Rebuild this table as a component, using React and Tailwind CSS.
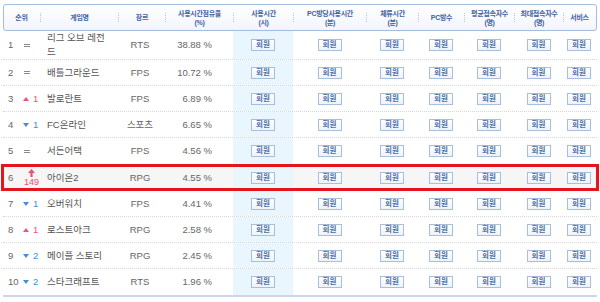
import React from 'react'

const COLS = 'grid grid-cols-[37px_78px_47px_68px_60px_73px_52px_46px_50px_49px_32px]'

const HEADS = [
  ['순위'], ['게임명'], ['장르'], ['사용시간점유율', '(%)'], ['사용시간', '(시)'],
  ['PC방당사용시간', '(분)'], ['체류시간', '(분)'], ['PC방수'], ['평균접속자수', '(명)'],
  ['최대접속자수', '(명)'], ['서비스'],
]

const ROWS = [
  { rank: 1, ch: 'same', name: '리그 오브 레전드', genre: 'RTS', share: '38.88 %', tall: true },
  { rank: 2, ch: 'same', name: '배틀그라운드', genre: 'FPS', share: '10.72 %' },
  { rank: 3, ch: 'up', n: 1, name: '발로란트', genre: 'FPS', share: '6.89 %' },
  { rank: 4, ch: 'down', n: 1, name: 'FC온라인', genre: '스포츠', share: '6.65 %' },
  { rank: 5, ch: 'same', name: '서든어택', genre: 'FPS', share: '4.56 %' },
  { rank: 6, ch: 'jump', n: 149, name: '아이온2', genre: 'RPG', share: '4.55 %', hot: true },
  { rank: 7, ch: 'down', n: 1, name: '오버워치', genre: 'FPS', share: '4.41 %' },
  { rank: 8, ch: 'up', n: 1, name: '로스트아크', genre: 'RPG', share: '2.58 %' },
  { rank: 9, ch: 'down', n: 2, name: '메이플 스토리', genre: 'RPG', share: '2.45 %' },
  { rank: 10, ch: 'down', n: 2, name: '스타크래프트', genre: 'RTS', share: '1.96 %' },
]

function Btn() {
  return (
    <span className="flex h-[12px] w-[24px] items-center justify-center border border-[#a7bedd] bg-gradient-to-b from-white to-[#eef3fa] text-[7.5px] font-bold leading-none text-[#4a6da3]">
      회원
    </span>
  )
}

function Change({ ch, n }) {
  if (ch === 'same') {
    return (
      <span className="ml-[2px] flex w-[6px] flex-col gap-[1px]">
        <span className="h-px bg-[#8a8a8a]" />
        <span className="h-px bg-[#8a8a8a]" />
      </span>
    )
  }
  if (ch === 'jump') {
    return (
      <span className="ml-[1px] flex w-[17px] flex-col items-center leading-[9px] text-[#ee4d6f]">
        <svg width="7" height="8" viewBox="0 0 7 8"><path d="M3.5 0 L7 4 H4.6 V8 H2.4 V4 H0 Z" fill="#ee4d6f" /></svg>
        <span className="mt-[1px] text-[9px]">{n}</span>
      </span>
    )
  }
  const up = ch === 'up'
  return (
    <span className={`flex items-center ${up ? 'text-[#ef5476]' : 'text-[#3f8ee0]'}`}>
      <svg width="6" height="4" viewBox="0 0 6 4" className="ml-[1px]">
        {up
          ? <path d="M3 0 L6 4 H0 Z" fill="#ef5476" />
          : <path d="M0 0 H6 L3 4 Z" fill="#3f8ee0" />}
      </svg>
      <span className="ml-[4px]">{n}</span>
    </span>
  )
}

function Cells({ r }) {
  return (
    <>
      <div className="flex items-center pl-[5px]">
        <span className="w-[14px]">{r.rank}</span>
        <Change ch={r.ch} n={r.n} />
      </div>
      <div className="flex items-center pl-[7px] pr-[7px] text-[#555]">{r.name}</div>
      <div className="flex items-center justify-center pr-[3px]">{r.genre}</div>
      <div className="flex items-center justify-end pr-[21px]">{r.share}</div>
      <div className="flex items-center justify-center bg-[#eaf6fe]"><Btn /></div>
      {[0, 1, 2, 3, 4, 5].map(i => (
        <div key={i} className="flex items-center justify-center"><Btn /></div>
      ))}
    </>
  )
}

export default function App() {
  return (
    <div className="h-[302px] w-[600px] overflow-hidden bg-white px-[3px] pt-[4px] font-['Liberation_Sans','Noto_Sans_CJK_KR',sans-serif] text-[9.5px] leading-[14px] text-[#666]">
      <div className="h-[27px] rounded-[3px] border border-[#a3bcdf] bg-gradient-to-b from-white to-[#f1f5fb]">
        <div className={`${COLS} -mx-px h-full`}>
          {HEADS.map((h, i) => (
            <div key={i} className="flex items-center">
              {i > 0 && <span className="h-[9px] border-l border-dotted border-[#c3c3c3]" />}
              <span className="flex flex-1 flex-col items-center text-[7px] font-bold leading-[9px] tracking-[-0.3px] text-[#3f62a0]">
                {h.map(t => <span key={t} className="whitespace-nowrap">{t}</span>)}
              </span>
            </div>
          ))}
        </div>
      </div>

      <div className="border-b-2 border-[#cbd7e8]">
        {ROWS.map(r => r.hot ? (
          <div key={r.rank} className="-mx-[2px] h-[27px] border-[3px] border-[#e2161c] bg-[#f6f6f6]">
            <div className={`${COLS} -ml-px h-full`}>
              <Cells r={r} />
            </div>
          </div>
        ) : (
          <div key={r.rank} className={`${COLS} ${r.tall ? 'h-[29px]' : 'h-[26px]'} ${r.rank === 5 || r.rank === 10 ? '' : 'border-b border-dotted border-[#d6d6d6]'}`}>
            <Cells r={r} />
          </div>
        ))}
      </div>
    </div>
  )
}
